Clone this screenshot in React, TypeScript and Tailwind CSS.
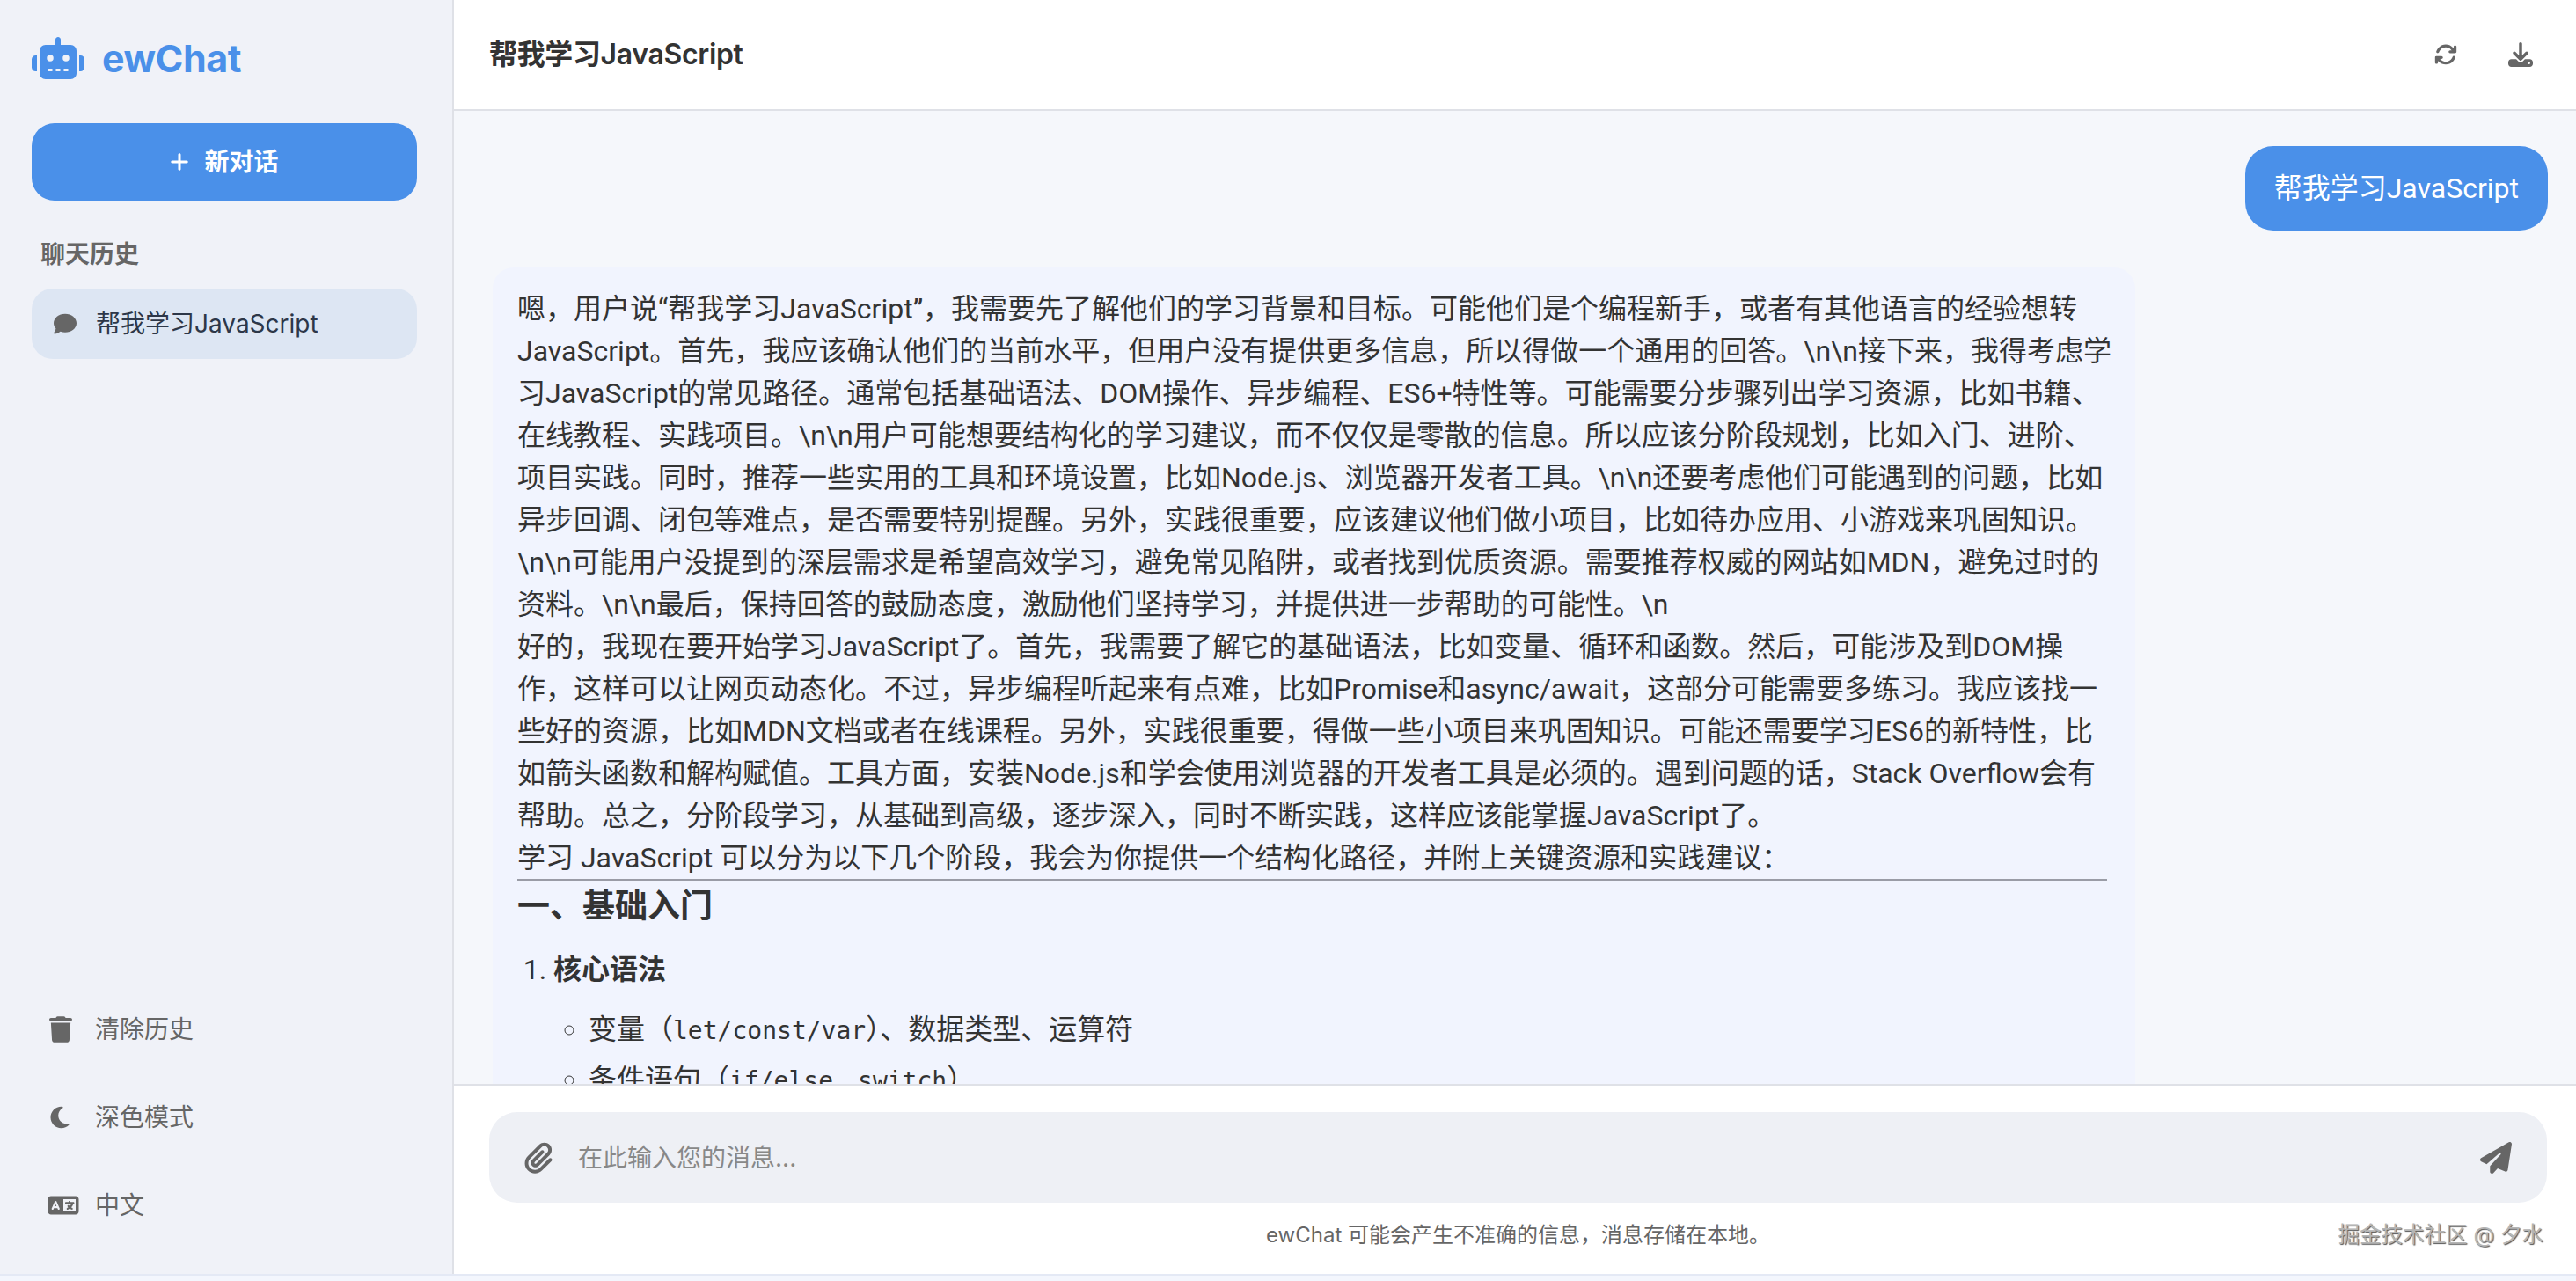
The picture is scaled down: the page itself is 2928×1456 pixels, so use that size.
import { FaRobot, FaPlus, FaComment, FaTrash, FaMoon, FaLanguage, FaPaperclip, FaPaperPlane, FaArrowsRotate, FaDownload } from 'react-icons/fa6'

const thinkingLines = [
  '嗯，用户说“帮我学习JavaScript”，我需要先了解他们的学习背景和目标。可能他们是个编程新手，或者有其他语言的经验想转',
  'JavaScript。首先，我应该确认他们的当前水平，但用户没有提供更多信息，所以得做一个通用的回答。\\n\\n接下来，我得考虑学',
  '习JavaScript的常见路径。通常包括基础语法、DOM操作、异步编程、ES6+特性等。可能需要分步骤列出学习资源，比如书籍、',
  '在线教程、实践项目。\\n\\n用户可能想要结构化的学习建议，而不仅仅是零散的信息。所以应该分阶段规划，比如入门、进阶、',
  '项目实践。同时，推荐一些实用的工具和环境设置，比如Node.js、浏览器开发者工具。\\n\\n还要考虑他们可能遇到的问题，比如',
  '异步回调、闭包等难点，是否需要特别提醒。另外，实践很重要，应该建议他们做小项目，比如待办应用、小游戏来巩固知识。',
  '\\n\\n可能用户没提到的深层需求是希望高效学习，避免常见陷阱，或者找到优质资源。需要推荐权威的网站如MDN，避免过时的',
  '资料。\\n\\n最后，保持回答的鼓励态度，激励他们坚持学习，并提供进一步帮助的可能性。\\n',
  '好的，我现在要开始学习JavaScript了。首先，我需要了解它的基础语法，比如变量、循环和函数。然后，可能涉及到DOM操',
  '作，这样可以让网页动态化。不过，异步编程听起来有点难，比如Promise和async/await，这部分可能需要多练习。我应该找一',
  '些好的资源，比如MDN文档或者在线课程。另外，实践很重要，得做一些小项目来巩固知识。可能还需要学习ES6的新特性，比',
  '如箭头函数和解构赋值。工具方面，安装Node.js和学会使用浏览器的开发者工具是必须的。遇到问题的话，Stack Overflow会有',
  '帮助。总之，分阶段学习，从基础到高级，逐步深入，同时不断实践，这样应该能掌握JavaScript了。',
  '学习 JavaScript 可以分为以下几个阶段，我会为你提供一个结构化路径，并附上关键资源和实践建议：',
]

function SideAction({ icon, label }: { icon: React.ReactNode; label: string }) {
  return (
    <div className="flex h-[60px] items-center pl-[20px] text-[#666]">
      <div className="flex w-[52px] shrink-0 items-center">{icon}</div>
      <span className="text-[28px] leading-none">{label}</span>
    </div>
  )
}

export default function App() {
  return (
    <div className="h-[1456px] overflow-hidden bg-[#f3f6fd] font-[Inter,'Noto_Sans_CJK_SC',sans-serif]">
      <div className="relative flex h-[1450px] border-b-2 border-[#e4e9f5]">
        {/* Sidebar */}
        <aside className="flex w-[516px] shrink-0 flex-col border-r-2 border-[#dfe1e7] bg-[#f0f2f8] px-[36px]">
          <div className="mt-[42px] flex items-center gap-[20px] text-[#4a90e9]">
            <FaRobot className="h-[48px] w-[60px]" />
            <span className="text-[43px] leading-[48px] font-bold tracking-[-0.5px]">ewChat</span>
          </div>
          <button className="mt-[50px] flex h-[88px] w-[438px] items-center justify-center gap-[17px] rounded-[26px] bg-[#4a90e9] text-[28px] font-semibold text-white">
            <FaPlus className="h-[24px] w-[22px]" />
            <span>新对话</span>
          </button>
          <div className="mt-[46px] pl-[10px] text-[28px] leading-[30px] font-semibold text-[#666]">聊天历史</div>
          <div className="mt-[24px] flex h-[80px] w-[438px] items-center gap-[21px] rounded-[24px] bg-[#dde6f3] pl-[24px] text-[28px] text-[#2d3748]">
            <FaComment className="h-[26px] w-[28px] text-[#666]" />
            <span>帮我学习JavaScript</span>
          </div>
          <div className="mt-auto mb-[48px] flex flex-col gap-[40px]">
            <SideAction icon={<FaTrash className="h-[30px] w-[26px]" />} label="清除历史" />
            <SideAction icon={<FaMoon className="h-[28px] w-[24px]" />} label="深色模式" />
            <SideAction icon={<FaLanguage className="ml-[-2px] h-[28px] w-[36px]" />} label="中文" />
          </div>
        </aside>

        {/* Main */}
        <main className="flex min-w-0 flex-1 flex-col bg-white">
          <header className="flex h-[126px] shrink-0 items-center justify-between border-b-2 border-[#dfe1e7] pr-[49px] pl-[40px]">
            <h1 className="text-[32px] font-semibold tracking-[-0.35px] text-[#333]">帮我学习JavaScript</h1>
            <div className="flex items-center gap-[58px] text-[#666]">
              <FaArrowsRotate className="h-[26px] w-[26px]" />
              <FaDownload className="h-[28px] w-[28px]" />
            </div>
          </header>

          <section className="min-h-0 flex-1 overflow-hidden bg-[#f5f7fb] pt-[40px] pr-[32px] pl-[44px] font-[Roboto,'Noto_Sans_CJK_SC',sans-serif]">
            <div className="flex justify-end">
              <div className="flex h-[96px] items-center rounded-[32px] bg-[#4a90e9] px-[33px] text-[32px] text-white">
                帮我学习JavaScript
              </div>
            </div>
            <div className="mt-[42px] w-[1867px] rounded-[24px] bg-[#f1f4fe] pt-[23px] pr-[32px] pb-[24px] pl-[28px] text-[32px] leading-[48px] text-[#333]">
              {thinkingLines.map(line => (
                <div key={line} className="whitespace-nowrap">{line}</div>
              ))}
              <hr className="border-t-2 border-[#9a9ca6]" />
              <h2 className="mt-[2px] text-[37px] leading-[56px] font-bold">一、基础入门</h2>
              <ol className="mt-[19px] list-decimal pl-[41px]">
                <li>
                  <strong className="font-semibold">核心语法</strong>
                  <ul className="mt-[20px] list-[circle] pl-[40px]">
                    <li className="mb-[7px]">
                      变量（<span className="font-['DejaVu_Sans_Mono',monospace] text-[28px]">let/const/var</span>）、数据类型、运算符
                    </li>
                    <li>
                      条件语句（<span className="font-['DejaVu_Sans_Mono',monospace] text-[28px]">if/else、switch</span>）
                    </li>
                  </ul>
                </li>
              </ol>
            </div>
          </section>

          <footer className="h-[216px] shrink-0 border-t-2 border-[#dfe1e7] pt-[30px] pr-[33px] pl-[40px]">
            <div className="flex h-[103px] items-center rounded-[32px] bg-[#eef0f5] pr-[40px] pl-[40px] text-[#666]">
              <FaPaperclip className="h-[36px] w-[32px]" />
              <span className="ml-[29px] flex-1 text-[28px] text-[#888]">在此输入您的消息...</span>
              <FaPaperPlane className="h-[36px] w-[36px]" />
            </div>
            <p className="mt-[20px] text-center text-[24px] leading-[34px] text-[#666]">
              ewChat 可能会产生不准确的信息，消息存储在本地。
            </p>
          </footer>
        </main>

        <div className="absolute right-[37px] bottom-[28px] text-[24.5px] leading-[34px] text-[#b5b5b5] [text-shadow:1px_1px_1px_#555]">
          掘金技术社区 @ 夕水
        </div>
      </div>
    </div>
  )
}
